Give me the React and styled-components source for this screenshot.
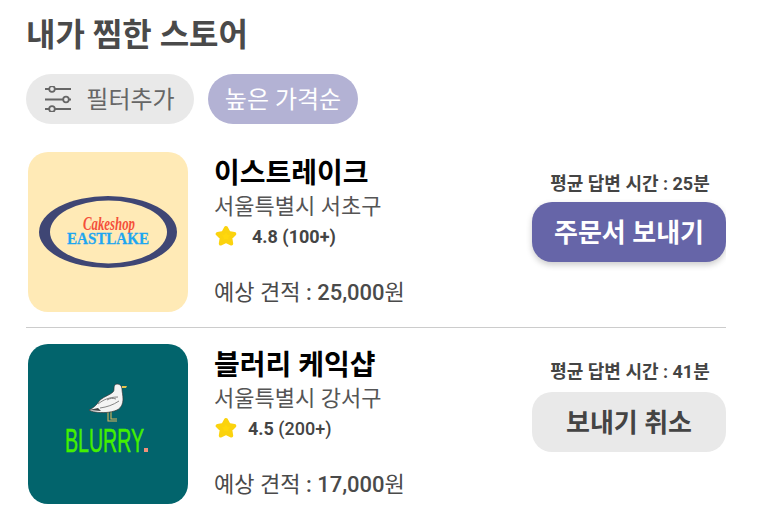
import styled, { createGlobalStyle } from "styled-components";

const GlobalStyle = createGlobalStyle`
  html, body {
    margin: 0;
    padding: 0;
    background: #fff;
    font-family: Roboto, "Noto Sans CJK KR", sans-serif;
  }
`;

const Page = styled.div`
  width: 700px;
  height: 508px;
  overflow: hidden;
  padding: 12px 0 0 26px;
`;

const Title = styled.h1`
  margin: 0;
  font-size: 32px;
  line-height: 46px;
  font-weight: 700;
  color: #4a4a4a;
`;

const Chips = styled.div`
  display: flex;
  gap: 14px;
  margin-top: 16px;
`;

const Chip = styled.div`
  display: flex;
  align-items: center;
  justify-content: center;
  gap: 15px;
  height: 50px;
  width: ${(props) => props.$width}px;
  border-radius: 25px;
  font-size: 24px;
  background: ${(props) => (props.$active ? "#b3b2d4" : "#e9e9e9")};
  color: ${(props) => (props.$active ? "#fff" : "#666")};
`;

const ChipLabel = styled.span`
  margin-top: -3px;
`;

const StoreRow = styled.div`
  display: flex;
  align-items: stretch;
  padding: ${(props) => (props.$first ? "28px" : "16px")} 0 15px 2px;
  border-bottom: ${(props) => (props.$first ? "1px solid #ccc" : "none")};
`;

const Thumb = styled.div`
  width: 160px;
  height: 160px;
  flex: none;
  border-radius: 20px;
  overflow: hidden;
  background: ${(props) => props.$bg};

  svg {
    display: block;
  }
`;

const Info = styled.div`
  flex: 1;
  margin-left: 27px;
  padding-top: 3px;
  display: flex;
  flex-direction: column;
`;

const StoreName = styled.div`
  font-size: 28px;
  line-height: 38px;
  font-weight: 700;
  color: #000;
  margin-left: -1px;
`;

const Address = styled.div`
  font-size: 22px;
  line-height: 27px;
  color: #555;
  margin-left: -1px;
`;

const Rating = styled.div`
  display: flex;
  align-items: center;
  height: 28px;
  margin-top: 2px;
  font-size: 18px;
  color: #444;
`;

const Score = styled.span`
  margin-left: ${(props) => props.$gap}px;
  font-weight: 700;
  white-space: pre;
`;

const Count = styled.span`
  font-weight: ${(props) => props.$weight};
`;

const Quote = styled.div`
  margin: 27px 0 0 -1px;
  font-size: 22px;
  line-height: 32px;
  color: #4a4a4a;
`;

const Price = styled.span`
  font-weight: 500;
`;

const Side = styled.div`
  width: 194px;
  flex: none;
  padding-top: ${(props) => props.$top}px;
  display: flex;
  flex-direction: column;
  align-items: center;
`;

const ReplyTime = styled.div`
  font-size: 18px;
  line-height: 24px;
  font-weight: 700;
  color: #444;
  margin-left: 2px;
`;

const ActionButton = styled.button`
  width: 194px;
  height: 60px;
  margin-top: ${(props) => props.$gap}px;
  border: none;
  border-radius: 20px;
  font-family: inherit;
  font-size: 26px;
  font-weight: 700;
  padding: 0 0 4px;
  background: ${(props) => (props.$primary ? "#6665a8" : "#e9e9e9")};
  color: ${(props) => (props.$primary ? "#fff" : "#444")};
  box-shadow: ${(props) =>
    props.$primary ? "0 3px 6px rgba(0, 0, 0, 0.2)" : "none"};
`;

const FilterIcon = () => (
  <svg width="26" height="26" viewBox="0 0 26 26" fill="none" stroke="#666" strokeWidth="1.8">
    <path d="M0 3h4M10 3h16M0 13.5h18M24 13.5h2M0 23h4M10 23h16" />
    <circle cx="7" cy="3" r="2.8" />
    <circle cx="21" cy="13.5" r="2.8" />
    <circle cx="7" cy="23" r="2.8" />
  </svg>
);

const Star = () => (
  <svg width="22" height="22" viewBox="0 0 22 22">
    <path
      d="M11 3l2.7 5 5.6.9-4 4 .9 5.6-5.2-2.6-5.2 2.6.9-5.6-4-4 5.6-.9z"
      fill="#ffd80c"
      stroke="#fbd30e"
      strokeWidth="4"
      strokeLinejoin="round"
    />
  </svg>
);

const EastlakeLogo = () => (
  <svg width="160" height="160" viewBox="0 0 160 160">
    <ellipse cx="80" cy="80" rx="69" ry="36" fill="#3f4674" />
    <ellipse cx="80.5" cy="80" rx="58.5" ry="31.5" fill="#ffeab6" />
    <text
      x="55"
      y="78"
      fontFamily="'Liberation Serif', serif"
      fontStyle="italic"
      fontWeight="700"
      fontSize="18"
      textLength="52"
      lengthAdjust="spacingAndGlyphs"
      fill="#f4503a"
    >
      Cakeshop
    </text>
    <text
      x="39"
      y="92"
      fontFamily="'Liberation Serif', serif"
      fontWeight="700"
      fontSize="17"
      textLength="82"
      lengthAdjust="spacingAndGlyphs"
      fill="#1ea6f0"
      stroke="#1ea6f0"
      strokeWidth="0.3"
    >
      EASTLAKE
    </text>
  </svg>
);

const BlurryLogo = () => (
  <svg width="160" height="160" viewBox="0 0 160 160">
    {/* 갈매기 */}
    <path d="M80 66v11h9M83 66v9h6" fill="none" stroke="#d9b45c" strokeWidth="1.1" />
    <path
      d="M61 66c4-2 7-4 11-10 5-4 10-5 13-8 1-1 1-2 1-4 0-2 1-4 3-4 3 0 5 2 5 5 0 3 1 6 1 10 0 5-2 9-6 11-7 3-15 3-22 2-2 0-4-1-6-2z"
      fill="#f4f4f4"
      stroke="#333"
      strokeWidth="0.7"
    />
    <path d="M70 60c5-4 11-7 20-7M72 64c7-1 13-3 19-7M79 56c3-2 6-2 9-1" fill="none" stroke="#777" strokeWidth="0.9" />
    <path d="M61 66l9-2 3 3z" fill="#444" />
    <path d="M94 42h5l-1 2h-4z" fill="#e6c34d" />
    <text
      x="37"
      y="108"
      fontFamily="'Liberation Sans', sans-serif"
      fontSize="33"
      textLength="79"
      lengthAdjust="spacingAndGlyphs"
      fill="#44f000"
      stroke="#44f000"
      strokeWidth="0.5"
    >
      BLURRY
    </text>
    <rect x="116" y="104" width="4" height="4" fill="#f0907a" />
  </svg>
);

function App() {
  return (
    <Page>
      <GlobalStyle />
      <Title>내가 찜한 스토어</Title>
      <Chips>
        <Chip $width={168}>
          <FilterIcon />
          <ChipLabel>필터추가</ChipLabel>
        </Chip>
        <Chip $width={150} $active>
          <ChipLabel>높은 가격순</ChipLabel>
        </Chip>
      </Chips>
      <StoreRow $first>
        <Thumb $bg="#ffeab6">
          <EastlakeLogo />
        </Thumb>
        <Info>
          <StoreName>이스트레이크</StoreName>
          <Address>서울특별시 서초구</Address>
          <Rating>
            <Star />
            <Score $gap={15}>4.8 </Score>
            <Count $weight={700}>(100+)</Count>
          </Rating>
          <Quote>
            예상 견적 <Price>: 25,000</Price>원
          </Quote>
        </Info>
        <Side $top={20}>
          <ReplyTime>평균 답변 시간 : 25분</ReplyTime>
          <ActionButton $primary $gap={6}>
            주문서 보내기
          </ActionButton>
        </Side>
      </StoreRow>
      <StoreRow>
        <Thumb $bg="#02646c">
          <BlurryLogo />
        </Thumb>
        <Info>
          <StoreName>블러리 케익샵</StoreName>
          <Address>서울특별시 강서구</Address>
          <Rating>
            <Star />
            <Score $gap={11}>4.5 </Score>
            <Count $weight={500}>(200+)</Count>
          </Rating>
          <Quote>
            예상 견적 <Price>: 17,000</Price>원
          </Quote>
        </Info>
        <Side $top={16}>
          <ReplyTime>평균 답변 시간 : 41분</ReplyTime>
          <ActionButton $gap={8}>보내기 취소</ActionButton>
        </Side>
      </StoreRow>
    </Page>
  );
}

export default App;
